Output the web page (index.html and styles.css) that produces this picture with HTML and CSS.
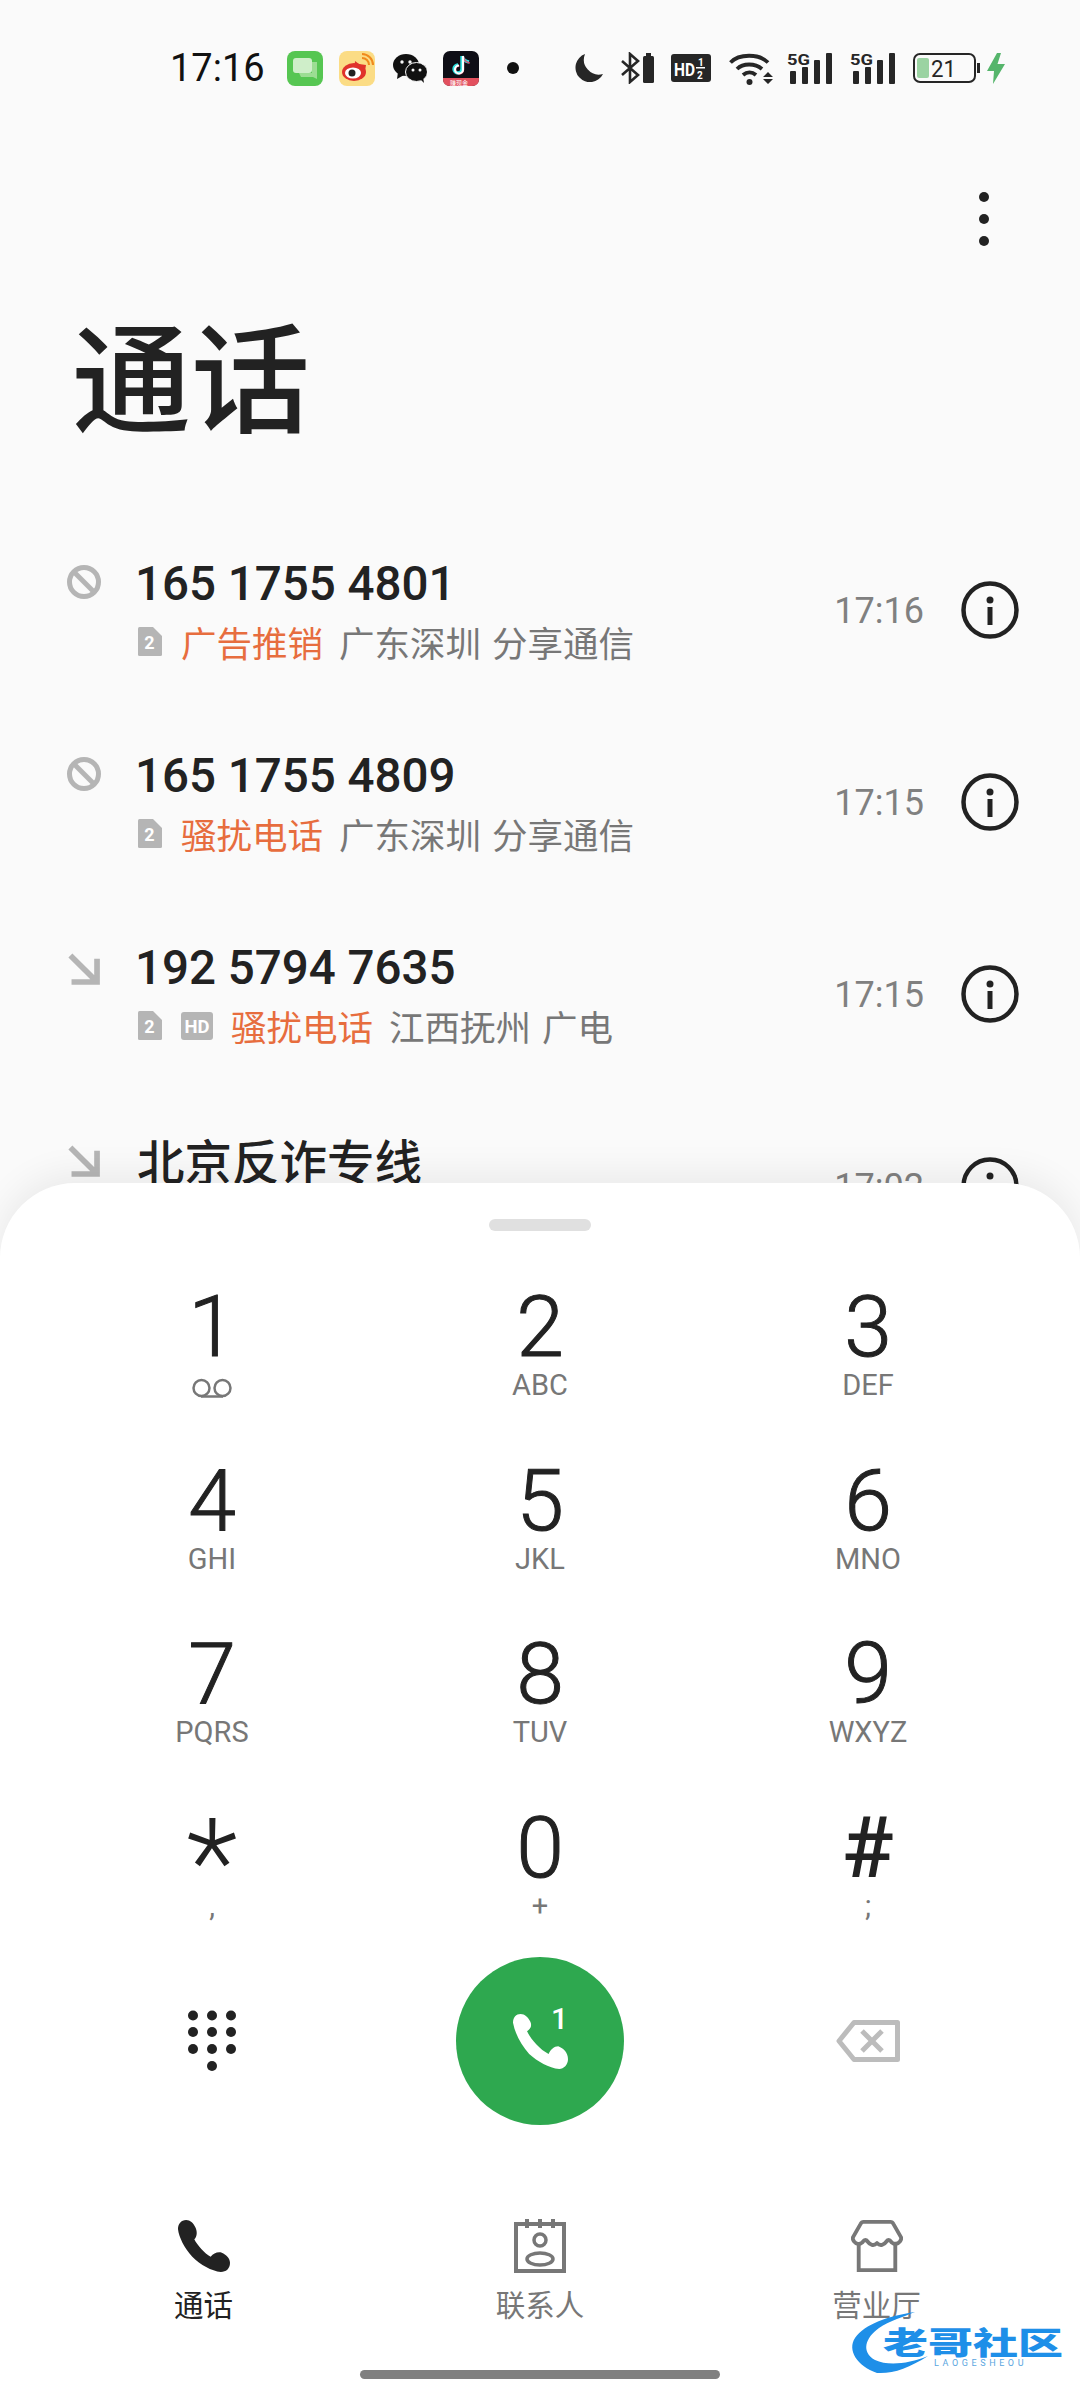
FILE: index.html
```html
<!DOCTYPE html>
<html lang="zh-CN">
<head>
<meta charset="utf-8">
<title>通话</title>
<link rel="stylesheet" href="styles.css">
</head>
<body>
<svg class="defs" width="0" height="0">
  <defs>
    <symbol id="handset" viewBox="0 0 51 51"><path d="M8 0C3 0 0 4 0 9C1 17 6 27 14 36C22 44 33 50 42 51C47 51 51 48 51 42C51 37 47 34 43 32C38 31 35 33 32 36C26 33 19 25 16 19C19 16 19 11 17 7C15 3 12 0 8 0Z"/></symbol>
    <symbol id="handset-thin" viewBox="0 0 51 51"><path d="M7 0C3 0 0 3 0 8C2 19 8 29 15 37C23 44 33 50 43 51C47 51 51 47 51 42C51 36 47 32 42 30C38 30 35 33 33 37C25 33 17 24 13 16C16 14 18 11 16 7C14 3 11 0 7 0Z"/></symbol>
    <symbol id="block" viewBox="0 0 34 34"><circle cx="17" cy="17" r="14.5" fill="none" stroke="#b5b5b5" stroke-width="5"/><path d="M7 7L27 27" stroke="#b5b5b5" stroke-width="5"/></symbol>
    <symbol id="incoming" viewBox="0 0 30 30"><path d="M3 3L25 25M4 26.500H26.500V6" fill="none" stroke="#b5b5b5" stroke-width="5"/></symbol>
    <symbol id="info" viewBox="0 0 58 58"><circle cx="29" cy="29" r="26.500" fill="none" stroke="#222" stroke-width="4.500"/><circle cx="29" cy="19" r="3.500" fill="#222"/><rect x="26.500" y="26" width="5" height="18" fill="#222"/></symbol>
    <symbol id="sim" viewBox="0 0 24 29"><path d="M0 1.500Q0 0 1.500 0H15L24 9V27.500Q24 29 22.500 29H1.500Q0 29 0 27.500Z" fill="#b5b5b5"/><text x="11.500" y="22" text-anchor="middle" font-family="Roboto" font-weight="700" font-size="18" fill="#fff">2</text></symbol>
  </defs>
</svg>
<main class="screen">
  <header class="status">
    <span class="status-time">17:16</span>
    <svg class="st st-msg" viewBox="0 0 36 35"><rect width="36" height="35" rx="8" fill="#56c652"/><rect x="6" y="7" width="19" height="15" rx="3" fill="#cfeec9"/><path d="M12 22H30V28L26 26H14Z" fill="#9cdd93"/><rect x="25" y="11" width="5" height="13" fill="#9cdd93"/></svg>
    <svg class="st st-weibo" viewBox="0 0 36 35"><rect width="36" height="35" rx="8" fill="#fbdc85"/><ellipse cx="15" cy="21" rx="12" ry="9" fill="#e0322b"/><path d="M16 10L20 13L27 14L26 20L15 22Z" fill="#e0322b"/><ellipse cx="14" cy="22" rx="8" ry="5.500" fill="#fff"/><circle cx="13" cy="22" r="3.500" fill="#222"/><path d="M23 7A7 7 0 0 1 30 14M23 3A11 11 0 0 1 34 14" fill="none" stroke="#f08a1d" stroke-width="2"/></svg>
    <svg class="st st-wechat" viewBox="0 0 34 29"><ellipse cx="13" cy="11" rx="13" ry="11" fill="#111"/><path d="M5 18L4 25L11 21Z" fill="#111"/><ellipse cx="23.500" cy="18" rx="11" ry="9.500" fill="#111" stroke="#fafafa" stroke-width="1"/><path d="M27 25L31 29L30 23Z" fill="#111"/><circle cx="9" cy="8" r="1.700" fill="#fafafa"/><circle cx="17" cy="8" r="1.700" fill="#fafafa"/><circle cx="20" cy="16" r="1.500" fill="#fafafa"/><circle cx="27" cy="16" r="1.500" fill="#fafafa"/></svg>
    <svg class="st st-tiktok" viewBox="0 0 36 35"><rect width="36" height="35" rx="7" fill="#0e0e16"/><path d="M0 27H36V28Q36 35 29 35H7Q0 35 0 28Z" fill="#e2505e"/><path d="M19 5V18A4 4 0 1 1 15 14M19 5Q20 10 26 11" fill="none" stroke="#2ce0e0" stroke-width="3.400"/><path d="M20.500 6V19A4 4 0 1 1 16.500 15M20.500 6Q21.500 11 27 12" fill="none" stroke="#f5365c" stroke-width="1.400" opacity=".8"/><path d="M20 5V18.500A4 4 0 1 1 16 14.500" fill="none" stroke="#fff" stroke-width="2.200"/><text x="16" y="33.500" text-anchor="middle" font-family="'Noto Sans CJK SC'" font-size="6" fill="#fff">赚现金</text></svg>
    <span class="st-dot"></span>
    <svg class="st st-moon" viewBox="0 0 29 29"><path d="M11 0A14.500 14.500 0 1 0 29 20A15 15 0 0 1 11 0Z" fill="#262626"/></svg>
    <svg class="st st-bt" viewBox="0 0 34 32"><path d="M2 9L18 23L10 30V2L18 9L2 23" fill="none" stroke="#262626" stroke-width="2.600"/><rect x="23" y="4" width="11" height="27" rx="1.500" fill="#262626"/><rect x="26" y="1" width="5" height="3" fill="#262626"/></svg>
    <svg class="st st-hd" viewBox="0 0 40 28"><rect width="40" height="28" rx="3" fill="#262626"/><text x="3" y="21.500" font-family="Roboto" font-weight="700" font-size="19" textLength="21" lengthAdjust="spacingAndGlyphs" fill="#fff">HD</text><text x="27" y="12" font-family="Roboto" font-weight="700" font-size="10" fill="#fff">1</text><text x="26" y="25" font-family="Roboto" font-weight="700" font-size="10" fill="#fff">2</text><rect x="25" y="13" width="9" height="1.500" fill="#fff"/></svg>
    <svg class="st st-wifi" viewBox="0 0 44 33"><path d="M1.500 10.500C10 1.500 30 1.500 39 10.500M8 17C14 11 26 11 33 17M14 23C18 19.500 23 19.500 27 23" fill="none" stroke="#262626" stroke-width="3.800"/><circle cx="20.500" cy="30" r="3" fill="#262626"/><path d="M39 20L44 25H34ZM34 27H44L39 32Z" fill="#262626"/></svg>
    <svg class="st st-sig" viewBox="0 0 46 32"><text x="0" y="13" font-family="Roboto" font-weight="700" font-size="15.500" textLength="23" lengthAdjust="spacingAndGlyphs" fill="#262626">5G</text><rect x="3" y="19" width="6" height="13" rx="1" fill="#262626"/><rect x="15" y="15" width="6" height="17" rx="1" fill="#262626"/><rect x="27" y="8" width="6" height="24" rx="1" fill="#262626"/><rect x="39" y="1" width="6" height="31" rx="1" fill="#262626"/></svg>
    <svg class="st st-sig st-sig2" viewBox="0 0 46 32"><text x="0" y="13" font-family="Roboto" font-weight="700" font-size="15.500" textLength="23" lengthAdjust="spacingAndGlyphs" fill="#262626">5G</text><rect x="3" y="19" width="6" height="13" rx="1" fill="#262626"/><rect x="15" y="15" width="6" height="17" rx="1" fill="#262626"/><rect x="27" y="8" width="6" height="24" rx="1" fill="#262626"/><rect x="39" y="1" width="6" height="31" rx="1" fill="#262626"/></svg>
    <svg class="st st-batt" viewBox="0 0 67 30"><rect x="1" y="1" width="61" height="28" rx="6" fill="none" stroke="#262626" stroke-width="2"/><rect x="4" y="5" width="12" height="20" rx="2" fill="#9bd3a2"/><rect x="64" y="10" width="3" height="10" fill="#262626"/><text x="18" y="24" font-family="Roboto" font-size="24" fill="#262626" textLength="25" lengthAdjust="spacingAndGlyphs">21</text></svg>
    <svg class="st st-bolt" viewBox="0 0 18 31"><path d="M10 0L0 18H7L6 31L18 11H10.500L14 0Z" fill="#55b56b"/></svg>
  </header>

  <div class="toolbar">
    <span class="menu"><i></i><i></i><i></i></span>
  </div>
  <h1 class="title">通话</h1>

  <ul class="calls">
    <li class="row">
      <svg class="row-icon"><use href="#block"/></svg>
      <div class="row-body">
        <div class="row-name">165 1755 4801</div>
        <div class="row-sub"><svg class="sim"><use href="#sim"/></svg><span class="tag">广告推销</span><span class="place">广东深圳</span><span class="place">分享通信</span></div>
      </div>
      <span class="row-time">17:16</span>
      <svg class="row-info"><use href="#info"/></svg>
    </li>
    <li class="row">
      <svg class="row-icon"><use href="#block"/></svg>
      <div class="row-body">
        <div class="row-name">165 1755 4809</div>
        <div class="row-sub"><svg class="sim"><use href="#sim"/></svg><span class="tag">骚扰电话</span><span class="place">广东深圳</span><span class="place">分享通信</span></div>
      </div>
      <span class="row-time">17:15</span>
      <svg class="row-info"><use href="#info"/></svg>
    </li>
    <li class="row">
      <svg class="row-icon row-icon-arrow"><use href="#incoming"/></svg>
      <div class="row-body">
        <div class="row-name">192 5794 7635</div>
        <div class="row-sub"><svg class="sim"><use href="#sim"/></svg><svg class="hd-tag" viewBox="0 0 32 28"><rect width="32" height="28" rx="3" fill="#b5b5b5"/><text x="16" y="21" text-anchor="middle" font-family="Roboto" font-weight="700" font-size="19" textLength="25" lengthAdjust="spacingAndGlyphs" fill="#fff">HD</text></svg><span class="tag">骚扰电话</span><span class="place">江西抚州</span><span class="place">广电</span></div>
      </div>
      <span class="row-time">17:15</span>
      <svg class="row-info"><use href="#info"/></svg>
    </li>
    <li class="row">
      <svg class="row-icon row-icon-arrow"><use href="#incoming"/></svg>
      <div class="row-body">
        <div class="row-name row-name-cjk">北京反诈专线</div>
        <div class="row-sub"></div>
      </div>
      <span class="row-time">17:02</span>
      <svg class="row-info"><use href="#info"/></svg>
    </li>
  </ul>

  <section class="sheet">
    <div class="handle"></div>
    <div class="keypad">
      <div class="key"><span class="digit">1</span><svg class="vm" viewBox="0 0 42 20"><circle cx="10.500" cy="10" r="8" fill="none" stroke="#777" stroke-width="2.500"/><circle cx="31.500" cy="10" r="8" fill="none" stroke="#777" stroke-width="2.500"/><path d="M10 18.500H32" stroke="#777" stroke-width="2.500"/></svg></div>
      <div class="key"><span class="digit">2</span><span class="letters">ABC</span></div>
      <div class="key"><span class="digit">3</span><span class="letters">DEF</span></div>
      <div class="key"><span class="digit">4</span><span class="letters">GHI</span></div>
      <div class="key"><span class="digit">5</span><span class="letters">JKL</span></div>
      <div class="key"><span class="digit">6</span><span class="letters">MNO</span></div>
      <div class="key"><span class="digit">7</span><span class="letters">PQRS</span></div>
      <div class="key"><span class="digit">8</span><span class="letters">TUV</span></div>
      <div class="key"><span class="digit">9</span><span class="letters">WXYZ</span></div>
      <div class="key"><span class="digit digit-star">*</span><span class="letters letters-star">,</span></div>
      <div class="key"><span class="digit">0</span><span class="letters">+</span></div>
      <div class="key"><span class="digit digit-hash">#</span><span class="letters">;</span></div>
    </div>
    <div class="actions">
      <svg class="dots" viewBox="0 0 50 62"><g fill="#222"><circle cx="6" cy="5.500" r="5"/><circle cx="25" cy="5.500" r="5"/><circle cx="44" cy="5.500" r="5"/><circle cx="6" cy="22" r="5"/><circle cx="25" cy="22" r="5"/><circle cx="44" cy="22" r="5"/><circle cx="6" cy="39" r="5"/><circle cx="25" cy="39" r="5"/><circle cx="44" cy="39" r="5"/><circle cx="25" cy="56" r="5"/></g></svg>
      <div class="call">
        <svg class="call-icon"><use href="#handset-thin"/></svg>
        <span class="call-sim">1</span>
      </div>
      <svg class="backspace" viewBox="0 0 64 42"><path d="M18 2.500H61.500V39.500H18L3 21Z" fill="none" stroke="#bcbcbc" stroke-width="5" stroke-linejoin="round"/><path d="M26 11L46 31M46 11L26 31" stroke="#bcbcbc" stroke-width="5"/></svg>
    </div>
    <nav class="tabs">
      <div class="tab tab-active">
        <svg class="tab-icon"><use href="#handset"/></svg>
        <span>通话</span>
      </div>
      <div class="tab">
        <svg class="tab-icon" viewBox="0 0 52 54"><path d="M2 5H50V52H2Z" fill="none" stroke="#777" stroke-width="4"/><path d="M13 0V9M26 0V9M39 0V9" stroke="#777" stroke-width="4"/><circle cx="26" cy="21" r="6" fill="none" stroke="#777" stroke-width="3.500"/><ellipse cx="26" cy="40" rx="13" ry="6" fill="none" stroke="#777" stroke-width="3.500"/></svg>
        <span>联系人</span>
      </div>
      <div class="tab">
        <svg class="tab-icon" viewBox="0 0 54 54"><path d="M13 2H41Q43 2 44 4L52 18Q52.500 20 51 22Q47 27 42 23Q40 20 38 21Q32 29 27 24Q22 29 16 21Q14 20 12 23Q7 27 3 22Q1.500 20 2 18L10 4Q11 2 13 2Z" fill="none" stroke="#777" stroke-width="4" stroke-linejoin="round"/><path d="M8 25V52H46V25" fill="none" stroke="#777" stroke-width="4"/></svg>
        <span>营业厅</span>
      </div>
    </nav>
    <div class="home"></div>
  </section>

  <div class="watermark">
    <svg class="wm-swirl" viewBox="0 0 90 62"><path d="M72 0C45 4 22 12 12 26C4 38 14 54 34 61C50 62 66 56 85 44C65 52 45 54 32 48C18 40 22 26 36 16C46 9 60 5 72 0Z" fill="#1e8fe8"/></svg>
    <span class="wm-cn">老哥社区</span>
    <span class="wm-en">LAOGESHEOU</span>
  </div>
</main>
</body>
</html>
```

FILE: styles.css
```css
* { box-sizing: border-box; }
html, body { margin: 0; padding: 0; }
body { width: 1080px; height: 2400px; overflow: hidden; background: #fafafa; font-family: Roboto, "Noto Sans CJK SC", sans-serif; color: #222; }
.defs { display: block; position: absolute; }
.screen { position: relative; width: 1080px; height: 2400px; overflow: hidden; }

/* status bar */
.status { display: flex; align-items: center; height: 136px; padding-left: 170px; }
.status-time { width: 117px; font-size: 38px; color: #111; line-height: 1; }
.st { display: block; flex: none; }
.st-msg { width: 36px; height: 35px; margin-right: 16px; }
.st-weibo { width: 36px; height: 35px; margin-right: 18px; }
.st-wechat { width: 34px; height: 29px; margin-right: 16px; }
.st-tiktok { width: 36px; height: 35px; margin-right: 28px; }
.st-dot { width: 12px; height: 12px; border-radius: 50%; background: #111; margin-right: 55px; }
.st-moon { width: 29px; height: 29px; margin-right: 17px; }
.st-bt { width: 34px; height: 32px; margin-right: 17px; }
.st-hd { width: 40px; height: 28px; margin-right: 18px; }
.st-wifi { width: 44px; height: 33px; margin-right: 14px; }
.st-sig { width: 46px; height: 32px; margin-right: 17px; }
.st-sig2 { margin-right: 17px; }
.st-batt { width: 67px; height: 30px; margin-right: 7px; }
.st-bolt { width: 18px; height: 31px; }

/* header */
.toolbar { display: flex; justify-content: flex-end; height: 128px; padding: 56px 91px 0 0; }
.menu { display: flex; flex-direction: column; gap: 12px; width: 10px; }
.menu i { display: block; width: 10px; height: 10px; border-radius: 50%; background: #222; }
.title { margin: 0; height: 253px; padding: 33px 0 0 72px; font-family: "Noto Sans CJK SC", sans-serif; font-size: 119px; line-height: 150px; font-weight: 500; color: #222; }

/* call list */
.calls { list-style: none; margin: 0; padding: 0; }
.row { display: flex; align-items: center; height: 192px; padding: 0 61px 0 67px; }
.row-icon { flex: none; width: 34px; height: 34px; margin-right: 37px; align-self: flex-start; margin-top: 48px; }
.row-icon-arrow { margin-top: 51px; }
.row-body { flex: 1; min-width: 0; margin-top: -6px; }
.row-name { margin-left: -3px; font-size: 47.500px; font-weight: 500; line-height: 60px; color: #222; }
.row-name-cjk { margin-left: -1px; font-family: "Noto Sans CJK SC", sans-serif; font-size: 47.500px; }
.row-sub { display: flex; align-items: center; height: 50px; margin-top: 3px; font-family: "Noto Sans CJK SC", sans-serif; font-size: 35.500px; line-height: 50px; color: #777; }
.sim { flex: none; width: 24px; height: 29px; margin-right: 19px; }
.hd-tag { flex: none; width: 32px; height: 28px; margin-right: 18px; }
.tag { color: #e76d3e; margin-right: 16px; }
.place { margin-right: 11px; }
.row-time { flex: none; margin-right: 37px; font-size: 36px; color: #808080; margin-top: -5px; }
.row-info { flex: none; width: 58px; height: 58px; margin-top: -6px; }

/* bottom sheet */
.sheet { position: absolute; left: 0; right: 0; top: 1183px; bottom: 0; background: #fff; border-radius: 75px 75px 0 0; box-shadow: 0 -8px 36px rgba(0, 0, 0, .07); }
.handle { width: 102px; height: 12px; margin: 36px auto 0; border-radius: 6px; background: #e0e0e0; }
.keypad { display: grid; grid-template-columns: repeat(3, 328px); grid-auto-rows: 173.500px; justify-content: center; margin-top: 46px; }
.key { display: flex; flex-direction: column; align-items: center; }
.digit { font-size: 86px; font-weight: 300; -webkit-text-stroke: 1px #222; line-height: 100px; height: 100px; color: #222; }
.digit-star { font-size: 120px; line-height: 130px; height: 100px; -webkit-text-stroke: 0; }
.digit-hash { font-weight: 500; -webkit-text-stroke: 0; }
.letters { font-size: 29px; line-height: 34px; height: 34px; margin-top: -9px; color: #777; }
.vm { width: 42px; height: 20px; margin-top: 1px; }
.actions { display: grid; grid-template-columns: repeat(3, 328px); justify-content: center; justify-items: center; align-items: center; height: 168px; margin-top: -14px; }
.dots { width: 50px; height: 62px; }
.call { position: relative; display: flex; align-items: center; justify-content: center; width: 168px; height: 168px; border-radius: 50%; background: #2ea84f; }
.call-icon { width: 55px; height: 55px; fill: #fff; }
.call-sim { position: absolute; left: 95px; top: 45px; font-size: 30px; line-height: 34px; font-weight: 500; color: #fff; }
.backspace { width: 64px; height: 42px; }
.tabs { display: grid; grid-template-columns: repeat(3, 336.500px); justify-content: center; margin-top: 94px; }
.tab { display: flex; flex-direction: column; align-items: center; font-family: "Noto Sans CJK SC", sans-serif; font-size: 29.500px; line-height: 40px; color: #777; }
.tab-icon { display: block; width: 52px; height: 54px; margin-bottom: 10px; fill: #777; }
.tab-active { color: #222; }
.tab-active .tab-icon { fill: #222; }
.home { position: absolute; left: 360px; top: 1187px; width: 360px; height: 9px; border-radius: 5px; background: #808080; }

/* watermark */
.watermark { position: absolute; left: 843px; top: 2312px; width: 220px; height: 62px; }
.wm-swirl { position: absolute; left: 0; top: 0; width: 90px; height: 62px; }
.wm-cn { position: absolute; left: 40px; top: 4px; font-family: "Noto Sans CJK SC", sans-serif; font-weight: 900; font-size: 45px; line-height: 50px; white-space: nowrap; color: #1e8fe8; transform: scaleY(.68); transform-origin: left center; }
.wm-en { position: absolute; left: 91px; top: 46px; font-size: 9px; line-height: 10px; letter-spacing: 3.600px; white-space: nowrap; color: #5aa6e0; }
```
